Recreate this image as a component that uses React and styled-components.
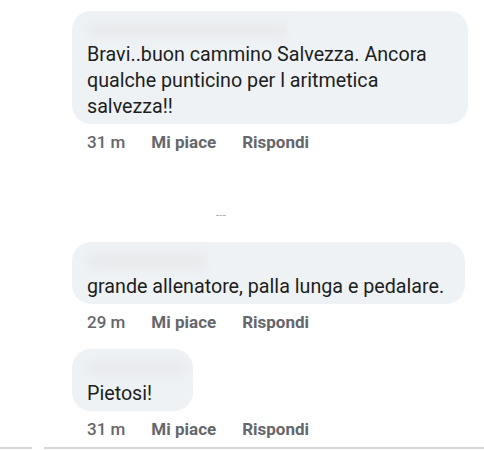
import React from 'react'
import styled, {createGlobalStyle} from 'styled-components'

const Global = createGlobalStyle`
body{
    margin: 0;
    background: #fff;
    font-family: Roboto, "Noto Sans", sans-serif;
}
`

const Page = styled.div`
width: 484px;
height: 450px;
overflow: hidden;
display: flex;
flex-direction: column;
padding: 11px 0 0 72px;
box-sizing: border-box;
`

const Comment = styled.div`
display: flex;
flex-direction: column;
align-items: flex-start;
margin-top: ${p => p.gap || 0}px;
`

const Bubble = styled.div`
width: ${p => p.w}px;
box-sizing: border-box;
background: #eff2f5;
border-radius: 19px;
padding: 12px 8px 4px 15px;
`

const NameBlur = styled.div`
width: ${p => p.w}px;
height: 14px;
margin-bottom: ${p => p.mb || 5}px;
background: #e8eaec;
border-radius: 8px;
filter: blur(4px);
`

const Text = styled.p`
margin: 0;
font-size: 19.7px;
line-height: 26px;
color: #1c1e21;
`

const Meta = styled.div`
display: flex;
gap: 26px;
margin: 7px 0 0 15px;
font-size: 17px;
line-height: 22px;
color: #65676b;
span{
    font-weight: 500;
}
b{
    font-weight: 700;
}
`

const Marks = styled.div`
height: 4px;
width: 10px;
margin: 62px 0 0 144px;
border-top: 1px dashed #b8b8b8;
`

const Footer = styled.div`
margin-top: auto;
margin-left: -72px;
height: 3px;
display: flex;
gap: 12px;
div{
    background: #d6d6d6;
    height: 2px;
}
`

const MetaRow = ({time}) => (
    <Meta>
        <span>{time}</span>
        <b>Mi piace</b>
        <b>Rispondi</b>
    </Meta>
)

const App = () => {
    return (
        <Page>
            <Global/>
            <Comment>
                <Bubble w={396}>
                    <NameBlur w={200}/>
                    <Text>Bravi..buon cammino Salvezza. Ancora<br/>qualche punticino per l aritmetica<br/>salvezza!!</Text>
                </Bubble>
                <MetaRow time="31 m"/>
            </Comment>
            <Marks/>
            <Comment gap={22}>
                <Bubble w={393}>
                    <NameBlur w={120} mb={6}/>
                    <Text>grande allenatore, palla lunga e pedalare.</Text>
                </Bubble>
                <MetaRow time="29 m"/>
            </Comment>
            <Comment gap={16}>
                <Bubble w={121}>
                    <NameBlur w={100} mb={6}/>
                    <Text>Pietosi!</Text>
                </Bubble>
                <MetaRow time="31 m"/>
            </Comment>
            <Footer>
                <div style={{width: 32}}/>
                <div style={{flex: 1}}/>
            </Footer>
        </Page>
    )
}

export default App
